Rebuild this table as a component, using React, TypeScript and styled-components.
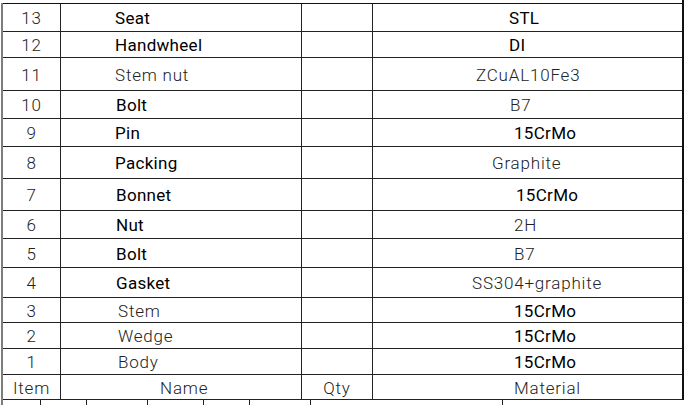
import styled, { createGlobalStyle } from 'styled-components';

interface PartRow {
  no: string;
  name: string;
  nameIndent: number;
  nameBold?: boolean;
  material: string;
  matIndent: number;
  matBold?: boolean;
  height: number;
}

const parts: PartRow[] = [
  { no: '13', name: 'Seat', nameIndent: 54, nameBold: true, material: 'STL', matIndent: 136, matBold: true, height: 28 },
  { no: '12', name: 'Handwheel', nameIndent: 54, nameBold: true, material: 'DI', matIndent: 136, matBold: true, height: 26 },
  { no: '11', name: 'Stem nut', nameIndent: 54, material: 'ZCuAL10Fe3', matIndent: 103, height: 33 },
  { no: '10', name: 'Bolt', nameIndent: 55, nameBold: true, material: 'B7', matIndent: 137, height: 28 },
  { no: '9', name: 'Pin', nameIndent: 54, nameBold: true, material: '15CrMo', matIndent: 141, matBold: true, height: 28 },
  { no: '8', name: 'Packing', nameIndent: 54, nameBold: true, material: 'Graphite', matIndent: 119, height: 32 },
  { no: '7', name: 'Bonnet', nameIndent: 55, nameBold: true, material: '15CrMo', matIndent: 143, matBold: true, height: 32 },
  { no: '6', name: 'Nut', nameIndent: 55, nameBold: true, material: '2H', matIndent: 141, height: 28 },
  { no: '5', name: 'Bolt', nameIndent: 55, nameBold: true, material: 'B7', matIndent: 141, height: 29 },
  { no: '4', name: 'Gasket', nameIndent: 55, nameBold: true, material: 'SS304+graphite', matIndent: 99, height: 30 },
  { no: '3', name: 'Stem', nameIndent: 57, material: '15CrMo', matIndent: 141, matBold: true, height: 25 },
  { no: '2', name: 'Wedge', nameIndent: 57, material: '15CrMo', matIndent: 141, matBold: true, height: 26 },
  { no: '1', name: 'Body', nameIndent: 57, material: '15CrMo', matIndent: 141, matBold: true, height: 26 },
];

// tick marks of the title block below the parts list
const ticks = [37, 45, 60, 55, 45, 60, 191];

const GlobalStyle = createGlobalStyle`
  html, body {
    margin: 0;
    padding: 0;
    background: #ffffff;
  }
  body {
    font-family: Roboto, "Liberation Sans", sans-serif;
    color: #1a1a1a;
  }
`;

const Page = styled.div`
  width: 688px;
  height: 405px;
  overflow: hidden;
  background: #ffffff;
`;

const Sheet = styled.div`
  margin-left: 1px;
  width: 681px;
  border-left: 2px solid #7d7d7d;
  height: 405px;
  box-sizing: border-box;
`;

const Table = styled.div`
  margin-top: 3px;
  width: 679px;
  border-top: 1px solid #111;
  border-right: 2px solid #111;
  box-sizing: content-box;
  position: relative;
  &::before {
    content: '';
    position: absolute;
    right: -2px;
    top: -4px;
    width: 2px;
    height: 3px;
    background: #111;
  }
`;

const Row = styled.div<{ $h: number }>`
  display: grid;
  grid-template-columns: 58px 241px 71px 1fr;
  height: ${(p) => p.$h}px;
  border-bottom: 1px solid #222;
  box-sizing: border-box;
`;

const Cell = styled.div<{ $bold?: boolean; $indent?: number; $center?: boolean; $last?: boolean }>`
  display: flex;
  align-items: center;
  justify-content: ${(p) => (p.$center ? 'center' : 'flex-start')};
  padding-left: ${(p) => p.$indent ?? 0}px;
  border-right: ${(p) => (p.$last ? 'none' : '1px solid #222')};
  font-size: 17px;
  line-height: 1;
  white-space: nowrap;
  font-weight: ${(p) => (p.$bold ? 400 : 300)};
  color: ${(p) => (p.$bold ? '#000' : '#222')};
  letter-spacing: ${(p) => (p.$bold ? '0.3px' : '0.8px')};
  padding-top: 2px;
`;

const TickStrip = styled.div`
  display: flex;
  height: 6px;
`;

const Tick = styled.div<{ $w: number }>`
  width: ${(p) => p.$w}px;
  border-right: 1px solid #222;
`;

export default function App() {
  return (
    <Page>
      <GlobalStyle />
      <Sheet>
        <Table>
          {parts.map((p) => (
            <Row key={p.no} $h={p.height}>
              <Cell $center>{p.no}</Cell>
              <Cell $indent={p.nameIndent} $bold={p.nameBold}>
                {p.name}
              </Cell>
              <Cell />
              <Cell $indent={p.matIndent} $bold={p.matBold} $last>
                {p.material}
              </Cell>
            </Row>
          ))}
          <Row $h={25}>
            <Cell $center>Item</Cell>
            <Cell $indent={99}>Name</Cell>
            <Cell $center>Qty</Cell>
            <Cell $indent={141} $last>
              Material
            </Cell>
          </Row>
        </Table>
        <TickStrip>
          {ticks.map((w, i) => (
            <Tick key={i} $w={w} />
          ))}
        </TickStrip>
      </Sheet>
    </Page>
  );
}
